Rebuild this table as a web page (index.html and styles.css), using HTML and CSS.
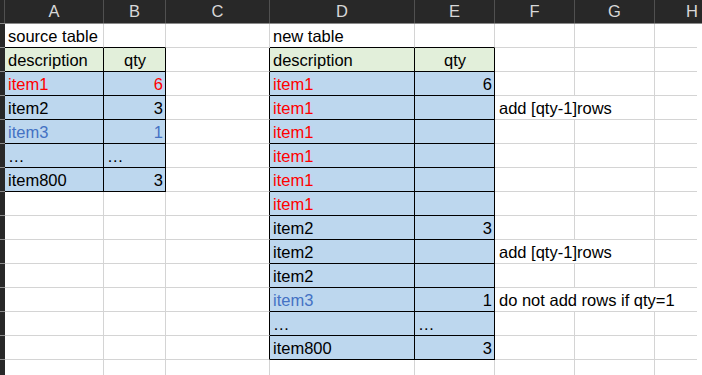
FILE: index.html
```html
<!DOCTYPE html>
<html>
<head>
<meta charset="utf-8">
<link rel="stylesheet" href="styles.css">
</head>
<body>
<div class="colhead">
  <div class="corner"></div>
  <div class="ch">A</div>
  <div class="ch">B</div>
  <div class="ch">C</div>
  <div class="ch">D</div>
  <div class="ch">E</div>
  <div class="ch">F</div>
  <div class="ch">G</div>
  <div class="ch last">H</div>
</div>
<div class="sheet">
  <!-- row 1 -->
  <div class="rh"></div>
  <div class="c bb">source table</div>
  <div class="c bb"></div>
  <div class="c"></div>
  <div class="c bb">new table</div>
  <div class="c bb"></div>
  <div class="c"></div>
  <div class="c"></div>
  <div class="c h"></div>
  <!-- row 2 -->
  <div class="rh"></div>
  <div class="c t green">description</div>
  <div class="c t green ctr">qty</div>
  <div class="c br"></div>
  <div class="c t green">description</div>
  <div class="c t green ctr">qty</div>
  <div class="c"></div>
  <div class="c"></div>
  <div class="c h"></div>
  <!-- row 3 -->
  <div class="rh"></div>
  <div class="c t blue red">item1</div>
  <div class="c t blue red r">6</div>
  <div class="c br"></div>
  <div class="c t blue red">item1</div>
  <div class="c t blue r">6</div>
  <div class="c"></div>
  <div class="c"></div>
  <div class="c h"></div>
  <!-- row 4 -->
  <div class="rh"></div>
  <div class="c t blue">item2</div>
  <div class="c t blue r">3</div>
  <div class="c br"></div>
  <div class="c t blue red">item1</div>
  <div class="c t blue"></div>
  <div class="c span2">add [qty-1]rows</div>
  <div class="c h"></div>
  <!-- row 5 -->
  <div class="rh"></div>
  <div class="c t blue navy">item3</div>
  <div class="c t blue navy r">1</div>
  <div class="c br"></div>
  <div class="c t blue red">item1</div>
  <div class="c t blue"></div>
  <div class="c"></div>
  <div class="c"></div>
  <div class="c h"></div>
  <!-- row 6 -->
  <div class="rh"></div>
  <div class="c t blue">…</div>
  <div class="c t blue">…</div>
  <div class="c br"></div>
  <div class="c t blue red">item1</div>
  <div class="c t blue"></div>
  <div class="c"></div>
  <div class="c"></div>
  <div class="c h"></div>
  <!-- row 7 -->
  <div class="rh"></div>
  <div class="c t blue">item800</div>
  <div class="c t blue r">3</div>
  <div class="c br"></div>
  <div class="c t blue red">item1</div>
  <div class="c t blue"></div>
  <div class="c"></div>
  <div class="c"></div>
  <div class="c h"></div>
  <!-- row 8 -->
  <div class="rh"></div>
  <div class="c"></div>
  <div class="c"></div>
  <div class="c br"></div>
  <div class="c t blue red">item1</div>
  <div class="c t blue"></div>
  <div class="c"></div>
  <div class="c"></div>
  <div class="c h"></div>
  <!-- row 9 -->
  <div class="rh"></div>
  <div class="c"></div>
  <div class="c"></div>
  <div class="c br"></div>
  <div class="c t blue">item2</div>
  <div class="c t blue r">3</div>
  <div class="c"></div>
  <div class="c"></div>
  <div class="c h"></div>
  <!-- row 10 -->
  <div class="rh"></div>
  <div class="c"></div>
  <div class="c"></div>
  <div class="c br"></div>
  <div class="c t blue">item2</div>
  <div class="c t blue"></div>
  <div class="c span2">add [qty-1]rows</div>
  <div class="c h"></div>
  <!-- row 11 -->
  <div class="rh"></div>
  <div class="c"></div>
  <div class="c"></div>
  <div class="c br"></div>
  <div class="c t blue">item2</div>
  <div class="c t blue"></div>
  <div class="c"></div>
  <div class="c"></div>
  <div class="c h"></div>
  <!-- row 12 -->
  <div class="rh"></div>
  <div class="c"></div>
  <div class="c"></div>
  <div class="c br"></div>
  <div class="c t blue navy">item3</div>
  <div class="c t blue r">1</div>
  <div class="c span3">do not add rows if qty=1</div>
  <!-- row 13 -->
  <div class="rh"></div>
  <div class="c"></div>
  <div class="c"></div>
  <div class="c br"></div>
  <div class="c t blue">…</div>
  <div class="c t blue">…</div>
  <div class="c"></div>
  <div class="c"></div>
  <div class="c h"></div>
  <!-- row 14 -->
  <div class="rh"></div>
  <div class="c"></div>
  <div class="c"></div>
  <div class="c br"></div>
  <div class="c t blue">item800</div>
  <div class="c t blue r">3</div>
  <div class="c"></div>
  <div class="c"></div>
  <div class="c h"></div>
  <!-- row 15 -->
  <div class="rh"></div>
  <div class="c"></div>
  <div class="c"></div>
  <div class="c"></div>
  <div class="c"></div>
  <div class="c"></div>
  <div class="c"></div>
  <div class="c"></div>
  <div class="c h"></div>
</div>
</body>
</html>
```
FILE: styles.css
```css
html, body {
  margin: 0;
  padding: 0;
  background: #ffffff;
  width: 702px;
  height: 375px;
  overflow: hidden;
}
body {
  font-family: "Liberation Sans", Arial, sans-serif;
  font-size: 16.5px;
  color: #000;
}
.colhead {
  display: grid;
  grid-template-columns: 5px 99px 62px 104px 145px 80px 80px 80px 47px;
  height: 24px;
  background: #282828;
  border-bottom: 1px solid #8a8a8a;
  box-sizing: border-box;
}
.corner {
  border-right: 1px solid #505050;
}
.ch {
  color: #d8d8d8;
  text-align: center;
  line-height: 23px;
  border-right: 1px solid #505050;
  box-sizing: border-box;
}
.ch.last {
  border-right: none;
  text-align: left;
  padding-left: 31px;
}
.sheet {
  display: grid;
  width: 697px;
  grid-template-columns: 5px 99px 62px 104px 145px 80px 80px 80px 42px;
  grid-auto-rows: 24px;
}
.rh {
  background: #282828;
  border-bottom: 1px solid #8c8c8c;
  box-sizing: border-box;
}
.c {
  box-sizing: border-box;
  border-right: 1px solid #d4d4d4;
  border-bottom: 1px solid #d4d4d4;
  line-height: 22px;
  padding: 1px 2px 0 3px;
  white-space: nowrap;
  overflow: visible;
}
.c.h {
  border-right: none;
}
.span2 {
  grid-column: span 2;
  padding-left: 4px;
}
.span3 {
  grid-column: span 3;
  padding-left: 4px;
  border-right: none;
}
.t {
  border-right-color: #000;
  border-bottom-color: #000;
}
.bb {
  border-bottom-color: #000;
}
.br {
  border-right-color: #000;
}
.green {
  background: #e2efda;
}
.blue {
  background: #bdd7ee;
}
.red {
  color: #ff0000;
}
.navy {
  color: #4472c4;
}
.r {
  text-align: right;
}
.ctr {
  text-align: center;
}
```
